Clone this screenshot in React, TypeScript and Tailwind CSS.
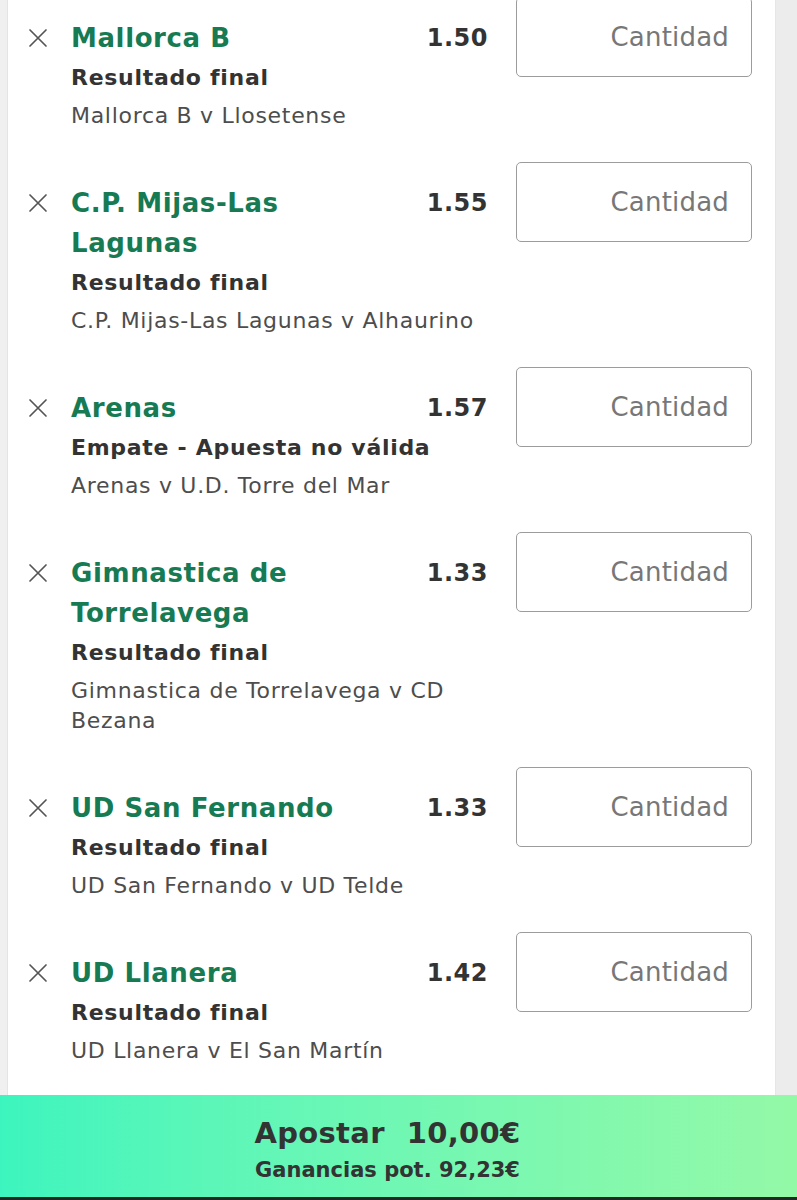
const bets = [
  { team: "Mallorca B", market: "Resultado final", event: "Mallorca B v Llosetense", odds: "1.50" },
  { team: "C.P. Mijas-Las Lagunas", market: "Resultado final", event: "C.P. Mijas-Las Lagunas v Alhaurino", odds: "1.55" },
  { team: "Arenas", market: "Empate - Apuesta no válida", event: "Arenas v U.D. Torre del Mar", odds: "1.57" },
  { team: "Gimnastica de Torrelavega", market: "Resultado final", event: "Gimnastica de Torrelavega v CD Bezana", odds: "1.33" },
  { team: "UD San Fernando", market: "Resultado final", event: "UD San Fernando v UD Telde", odds: "1.33" },
  { team: "UD Llanera", market: "Resultado final", event: "UD Llanera v El San Martín", odds: "1.42" },
];

type Bet = (typeof bets)[number];

function CloseIcon() {
  return (
    <svg width="20" height="20" viewBox="0 0 20 20" fill="none">
      <path d="M2 2 L18 18 M18 2 L2 18" stroke="#555" strokeWidth="1.7" strokeLinecap="round" />
    </svg>
  );
}

function BetRow({ bet }: { bet: Bet }) {
  return (
    <div className="flex items-start pl-[20px] pr-[23px]">
      <button className="mt-[31px] w-[20px] h-[20px] shrink-0">
        <CloseIcon />
      </button>

      <div className="ml-[23px] flex-1 min-w-0 pt-[21px] pr-[12px]">
        <div className="flex items-start">
          <div className="w-[290px] text-[26px] leading-[40px] font-bold tracking-[0.6px] text-[#167a53]">
            {bet.team}
          </div>
          <div className="ml-auto pr-[16px] text-[24px] leading-[40px] font-bold tracking-[0.5px] text-[#333]">
            {bet.odds}
          </div>
        </div>
        <div className="text-[22px] leading-[40px] font-bold tracking-[0.7px] text-[#333]">
          {bet.market}
        </div>
        <div className="mt-[3px] text-[22px] leading-[30px] tracking-[0.7px] text-[#4d4d4d]">
          {bet.event}
        </div>
      </div>

      <input
        placeholder="Cantidad"
        className="w-[236px] h-[80px] shrink-0 rounded-[5px] border-[1.5px] border-[#9c9c9c] bg-white pr-[22px] text-right text-[26px] tracking-[0.2px] text-[#333] placeholder:text-[#777] outline-none"
      />
    </div>
  );
}

export default function App() {
  return (
    <div
      className="w-[797px] h-[1200px] overflow-hidden flex flex-col bg-[#efefef]"
      style={{ fontFamily: '"DejaVu Sans", "Liberation Sans", sans-serif' }}
    >
      <div className="flex-1 flex min-h-0">
        <div className="w-[8px] bg-[#f0f0f0] border-r border-[#e4e4e4]"></div>
        <div className="flex-1 bg-white overflow-hidden">
          <div className="-mt-[3px] flex flex-col gap-[31px]">
            {bets.map((bet) => (
              <BetRow key={bet.team} bet={bet} />
            ))}
          </div>
        </div>
        <div className="w-[22px] bg-[#ececec] border-l border-[#e6e6e6]"></div>
      </div>

      {/* Place bet bar */}
      <button className="h-[102px] w-full flex flex-col items-center justify-center pr-[22px] pt-[6px] bg-gradient-to-r from-[#3cf5be] to-[#93f9a7] text-[#333]">
        <div className="flex items-baseline gap-[22px] text-[29px] leading-[36px] font-bold tracking-[0.3px]">
          <span>Apostar</span>
          <span>10,00€</span>
        </div>
        <div className="mt-[5px] text-[21px] leading-[28px] font-bold">Ganancias pot. 92,23€</div>
      </button>
      <div className="h-[3px] bg-[#1d2a23]"></div>
    </div>
  );
}
